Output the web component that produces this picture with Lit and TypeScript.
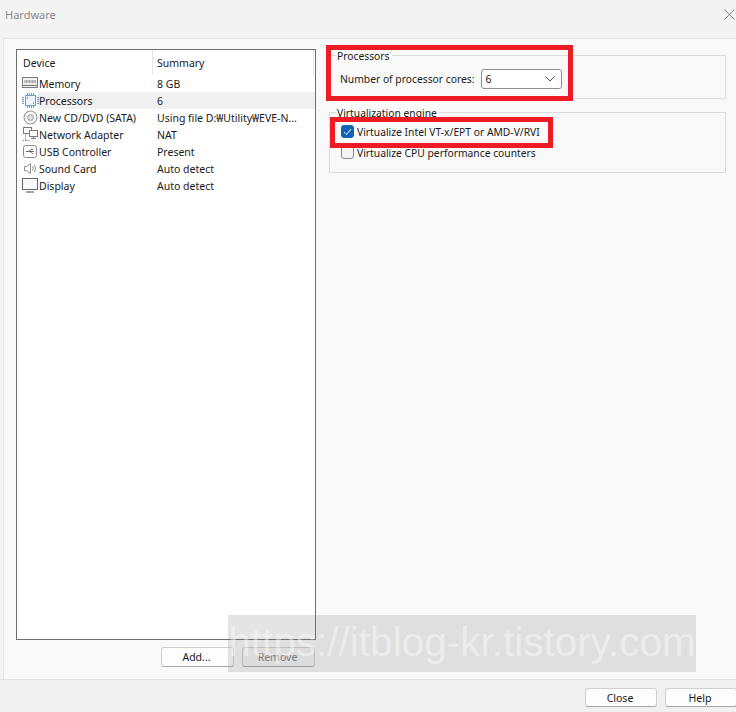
import { LitElement, html, css, svg } from "lit";
import { customElement } from "lit/decorators.js";

const ic = (c: unknown) => html`<svg class="ic" width="17" height="17" viewBox="0 0 17 17" fill="none" stroke="#7a7a7a" stroke-width="1">${c}</svg>`;
const icons: Record<string, unknown> = {
  mem: svg`<rect x=".5" y="2.5" width="15" height="10" fill="#f2f2f2"/><rect x="2" y="5" width="12" height="3" fill="#a8a8a8" stroke="none"/><path d="M.5 10h15M3 5v3M6 5v3M9 5v3M12 5v3" stroke="#d8d8d8"/><path d="M.5 10.5h15"/>`,
  cpu: svg`<rect x="3.5" y="3.5" width="10" height="10" fill="#eef5fb" stroke="#5f9fd4"/><path d="M0 5.500h2M0 7.500h2M0 9.500h2M0 11.500h2M15 5.500h2M15 7.500h2M15 9.500h2M15 11.500h2M5.500 1v2M7.500 1v2M9.500 1v2M11.500 1v2M5.500 14v2M7.500 14v2M9.500 14v2M11.500 14v2" stroke="#5f9fd4"/><path d="M5 6h1M11 11h1" stroke="#444"/>`,
  cd: svg`<circle cx="8.500" cy="8.500" r="6.500" fill="#f6f6f6" stroke="#8c8c8c"/><circle cx="8.500" cy="8.500" r="3" fill="#d4d4d4" stroke="#a8a8a8"/><circle cx="8.500" cy="8.500" r="1" fill="#fff" stroke="none"/>`,
  net: svg`<rect x="1.500" y="1.500" width="8" height="6" fill="#fff"/><rect x="7.500" y="4.500" width="8" height="6" fill="#fff"/><path d="M11.500 10.500v2M9 12.500h5"/><path d="M3.500 7.500v7h4M1 14.500h3" stroke-dasharray="1 1"/>`,
  usb: svg`<rect x="1.500" y="2.500" width="13" height="12" rx="2" fill="#fff" stroke="#8c8c8c"/><path d="M4 8.500h8M7 8.500l2-2h2M8 8.500l2 2h1" stroke="#666"/>`,
  snd: svg`<path d="M2.500 6.500h2l4-3v10l-4-3h-2z" fill="#fff" stroke="#8c8c8c"/><path d="M10.500 6.500q1.500 2 0 4M12.500 5q2 3.500 0 7" stroke="#8c8c8c"/>`,
  disp: svg`<rect x=".5" y="1.500" width="15" height="11" fill="#f8f8f8" stroke="#666"/><path d="M4 15h8" stroke="#a0a0a0" stroke-width="2"/>`,
};
const rows = [
  ["mem", "Memory", "8 GB"],
  ["cpu", "Processors", "6"],
  ["cd", "New CD/DVD (SATA)", "Using file D:₩Utility₩EVE-N..."],
  ["net", "Network Adapter", "NAT"],
  ["usb", "USB Controller", "Present"],
  ["snd", "Sound Card", "Auto detect"],
  ["disp", "Display", "Auto detect"],
];

@customElement("app-root")
export class AppRoot extends LitElement {
  static styles = css`
    :host { display: block; width: 736px; height: 712px; overflow: hidden; position: relative;
      font: 10.5px "Noto Sans", "Noto Sans CJK KR", sans-serif; color: #1a1a1a; background: #f3f3f3; }
    .win { display: flex; flex-direction: column; height: 712px; }
    .title { height: 38px; flex: none; display: flex; align-items: center; justify-content: space-between; padding: 0 0 10px 5px; box-sizing: border-box; color: #8a8a8a; font-size: 11px; }
    .title svg { margin-right: 1px; }
    .body { flex: 1; margin-left: 3px; background: #f9f9f9; border-top: 1px solid #e5e5e5; border-left: 1px solid #e5e5e5; display: flex; padding: 10px 10px 0 12px; gap: 13px; min-height: 0; }
    .left { width: 300px; flex: none; display: flex; flex-direction: column; }
    .list { width: 300px; height: 591px; box-sizing: border-box; background: #fff; border: 1px solid #6e6e6e; flex: none; }
    .head { display: grid; grid-template-columns: 135px 1fr; height: 25px; align-items: center; }
    .head span { padding-left: 6px; height: 100%; display: flex; align-items: center; }
    .head span + span { border-left: 1px solid #e5e5e5; border-right: 1px solid #e5e5e5; margin-right: 1px; padding-left: 4px; }
    .row { display: grid; grid-template-columns: 135px 1fr; height: 17px; align-items: center; white-space: nowrap; }
    .dev { display: flex; align-items: center; padding-left: 5px; }
    .sum { padding-left: 5px; }
    .sel { background: linear-gradient(#f0f0f0, #f0f0f0) no-repeat 21px 0 / 100% 100%; }
    .ic { flex: none; }
    .btns { display: flex; gap: 8px; margin: 7px 0 0 145px; }
    button { font: inherit; color: #1a1a1a; width: 73px; height: 20px; padding: 0 2px 0 0; background: #fdfdfd; border: 1px solid #d0d0d0; border-bottom-color: #a8a8a8; border-radius: 3px; }
    button.dis { color: #7d7d7d; background: #f5f5f5; }
    .right { flex: 1; display: flex; flex-direction: column; gap: 13px; padding-top: 6px; min-width: 0; font-size: 10.3px; }
    .group { border: 1px solid #dcdcdc; position: relative; box-sizing: border-box; }
    .legend { position: absolute; left: 6px; top: -7px; background: #f9f9f9; padding: 0 2px 0 1px; line-height: 14px; }
    .g1 { height: 44px; display: flex; align-items: center; padding: 3px 0 0 10px; gap: 7px; }
    .g2 { height: 61px; padding: 11px 0 0 11px; display: flex; flex-direction: column; gap: 6px; }
    .select { width: 81px; height: 20px; box-sizing: border-box; background: #fff; border: 1px solid #8e8e8e; border-radius: 3px; display: flex; align-items: center; justify-content: space-between; padding: 0 6px 0 3px; }
    .chk { display: flex; align-items: center; gap: 3px; height: 15px; white-space: nowrap; }
    .box { width: 13px; height: 13px; box-sizing: border-box; border: 1px solid #8a8a8a; border-radius: 3px; background: #f4f4f4; display: flex; align-items: center; justify-content: center; }
    .box.on { background: #0f62b8; border-color: #0f62b8; }
    .foot { height: 33px; flex: none; border-top: 1px solid #e2e2e2; background: #f0f0f0; display: flex; justify-content: flex-end; gap: 8px; padding: 8px 0 0 0; box-sizing: border-box; }
    .foot button { width: 72px; height: 19px; }
    .foot button:last-child { margin-right: -1px; }
    .red { position: absolute; border: 5px solid #ed1c24; box-sizing: border-box; }
    .r1 { left: 326px; top: 45px; width: 247px; height: 56px; }
    .r2 { left: 330px; top: 117px; width: 223px; height: 31px; }
    .mark { position: absolute; left: 228px; top: 615px; width: 468px; height: 57px; background: rgba(120,120,120,.2); color: rgba(255,255,255,.42); font: 40.5px/55px "Liberation Sans", sans-serif; text-align: center; white-space: nowrap; }
  `;
  render() {
    return html`<div class="win">
      <div class="title"><span>Hardware</span>
        <svg width="11" height="11" viewBox="0 0 11 11" stroke="#8a8a8a" fill="none"><path d="M.5.5l10 10M10.500.5l-10 10"/></svg></div>
      <div class="body">
        <div class="left">
          <div class="list">
            <div class="head"><span>Device</span><span>Summary</span></div>
            ${rows.map(r => html`<div class="row ${r[0] === "cpu" ? "sel" : ""}">
              <div class="dev">${ic(icons[r[0]])}<span>${r[1]}</span></div><div class="sum">${r[2]}</div></div>`)}
          </div>
          <div class="btns"><button>Add...</button><button class="dis">Remove</button></div>
        </div>
        <div class="right">
          <div class="group g1"><span class="legend">Processors</span><span>Number of processor cores:</span>
            <div class="select"><span>6</span><svg width="10" height="6" viewBox="0 0 10 6" fill="none" stroke="#555"><path d="M.5.5L5 5 9.500.5"/></svg></div></div>
          <div class="group g2"><span class="legend">Virtualization engine</span>
            <div class="chk"><span class="box on"><svg width="9" height="8" viewBox="0 0 9 8" fill="none" stroke="#fff"><path d="M1 4l2.500 2.500L8 1"/></svg></span>Virtualize Intel VT-x/EPT or AMD-V/RVI</div>
            <div class="chk"><span class="box"></span>Virtualize CPU performance counters</div>
          </div>
        </div>
      </div>
      <div class="foot"><button>Close</button><button>Help</button></div>
    </div>
    <div class="red r1"></div><div class="red r2"></div>
    <div class="mark">https://itblog-kr.tistory.com</div>`;
  }
}
